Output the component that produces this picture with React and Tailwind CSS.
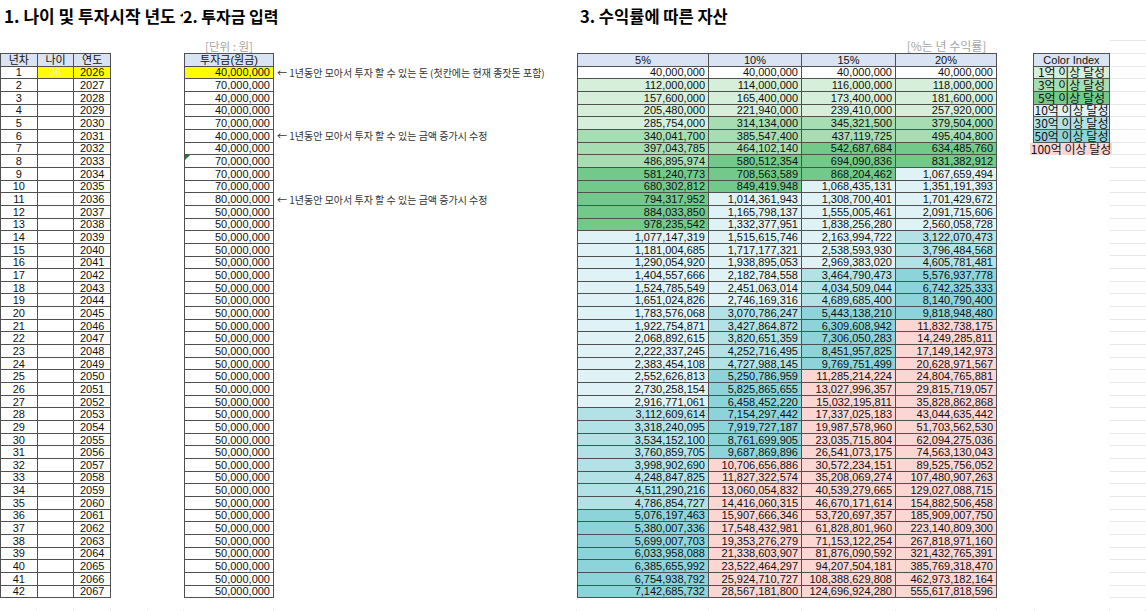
import clsx from "clsx";

const invest = [40, 70, 40, 40, 70, 40, 40, 70, 70, 70, 80, 50, 50]
  .concat(Array(29).fill(50))
  .map((m) => m * 1000000);

const rates = [0.05, 0.1, 0.15, 0.2];

const series = rates.map((r) => {
  let v = 0;
  return invest.map((a) => (v = v * (1 + r) + a));
});

const fmt = (n) => Math.round(n).toLocaleString("en-US");

const fillFor = (v) => {
  if (v >= 1e10) return "bg-[#fbd6d3]";
  if (v >= 5e9) return "bg-[#8dd3da]";
  if (v >= 3e9) return "bg-[#b2e2e6]";
  if (v >= 1e9) return "bg-[#dff2f5]";
  if (v >= 5e8) return "bg-[#72c98a]";
  if (v >= 3e8) return "bg-[#a6ddb2]";
  if (v >= 1e8) return "bg-[#d5efda]";
  return "bg-white";
};

const notes = {
  0: "← 1년동안 모아서 투자 할 수 있는 돈 (첫칸에는 현재 종잣돈 포함)",
  5: "← 1년동안 모아서 투자 할 수 있는 금액 증가시 수정",
  10: "← 1년동안 모아서 투자 할 수 있는 금액 증가시 수정",
};

const legend = [
  ["1억 이상 달성", "bg-[#d5efda]"],
  ["3억 이상 달성", "bg-[#a6ddb2]"],
  ["5억 이상 달성", "bg-[#72c98a]"],
  ["10억 이상 달성", "bg-[#dff2f5]"],
  ["30억 이상 달성", "bg-[#b2e2e6]"],
  ["50억 이상 달성", "bg-[#8dd3da]"],
];

const kr = { fontFamily: '"Noto Sans CJK KR", sans-serif' };

const Cell = ({ className, children }) => (
  <div
    className={clsx(
      "h-full border-r border-b border-[#505050] flex items-center px-[3px] overflow-hidden whitespace-nowrap",
      className
    )}
  >
    {children}
  </div>
);

const Row = ({ children, className }) => (
  <div className={clsx("flex h-[12.67px]", className)}>{children}</div>
);

const App = () => {
  return (
    <div
      className="w-[1146px] h-[611px] overflow-hidden bg-white text-[#111]"
      style={{ fontFamily: '"Liberation Sans", "Noto Sans CJK KR", sans-serif' }}
    >
      {/* titles */}
      <div className="flex items-center h-[31px] font-bold text-black pt-[1px]" style={kr}>
        <span className="w-[183px] pl-[4px] text-[17px] overflow-hidden whitespace-nowrap">1. 나이 및 투자시작 년도 설정</span>
        <span className="w-[397px] text-[16px] whitespace-nowrap">2. 투자금 입력</span>
        <span className="text-[16.5px] whitespace-nowrap">3. 수익률에 따른 자산</span>
      </div>

      <div className="flex text-[11px] leading-[12px]">
        {/* 1. years and age */}
        <div className="w-[111px] flex flex-col">
          <div className="h-[22px]" />
          <div className="border-l border-t border-[#505050]">
            <Row className="bg-[#dae3f3]">
              <Cell className="w-[37px] justify-center">년차</Cell>
              <Cell className="w-[37px] justify-center">나이</Cell>
              <Cell className="w-[37px] justify-center">연도</Cell>
            </Row>
            {invest.map((_, i) => (
              <Row key={i}>
                <Cell className="w-[37px] justify-center">{i + 1}</Cell>
                <Cell className={clsx("w-[37px] justify-center", i === 0 && "bg-[#ffff00] text-[#f7f3a6]")}>
                  {i === 0 ? "36" : ""}
                </Cell>
                <Cell className={clsx("w-[37px] justify-center", i === 0 && "bg-[#ffff00]")}>{2026 + i}</Cell>
              </Row>
            ))}
          </div>
        </div>

        <div className="w-[73px]" />

        {/* 2. investment */}
        <div className="w-[393px] flex flex-col">
          <div className="h-[22px] w-[90px] flex items-end justify-center pb-[1px] text-[11.5px] text-[#a6a6a6]" style={kr}>[단위 : 원]</div>
          <div className="border-t border-[#505050] w-[90px]">
            <Row className="bg-[#dae3f3] border-l border-[#505050]">
              <Cell className="w-[89px] justify-center">투자금(원금)</Cell>
            </Row>
          </div>
          {invest.map((a, i) => (
            <Row key={i}>
              <div className="relative border-l border-[#505050] w-[90px]">
                <Cell className={clsx("w-[89px] justify-end", i === 0 && "bg-[#ffff00]")}>{fmt(a)}</Cell>
                {i === 7 && (
                  <span className="absolute top-0 left-0 border-t-[5px] border-r-[5px] border-t-[#1e7b3a] border-r-transparent" />
                )}
              </div>
              {notes[i] && (
                <span className="ml-[3px] text-[10px] text-[#333] whitespace-nowrap self-center" style={kr}>
                  {notes[i]}
                </span>
              )}
            </Row>
          ))}
        </div>

        {/* 3. assets by rate */}
        <div className="w-[420px] flex flex-col">
          <div className="h-[22px] flex">
            <div className="w-[319px]" />
            <div className="w-[101px] flex items-end justify-center pb-[1px] text-[12px] text-[#a6a6a6] whitespace-nowrap" style={kr}>[%는 년 수익률]</div>
          </div>
          <div className="border-l border-t border-[#505050]">
            <Row className="bg-[#dae3f3]">
              <Cell className="w-[131px] justify-center">5%</Cell>
              <Cell className="w-[93px] justify-center">10%</Cell>
              <Cell className="w-[94px] justify-center">15%</Cell>
              <Cell className="w-[101px] justify-center">20%</Cell>
            </Row>
            {invest.map((_, i) => (
              <Row key={i}>
                <Cell className={clsx("w-[131px] justify-end", fillFor(series[0][i]))}>{fmt(series[0][i])}</Cell>
                <Cell className={clsx("w-[93px] justify-end", fillFor(series[1][i]))}>{fmt(series[1][i])}</Cell>
                <Cell className={clsx("w-[94px] justify-end", fillFor(series[2][i]))}>{fmt(series[2][i])}</Cell>
                <Cell className={clsx("w-[101px] justify-end", fillFor(series[3][i]))}>{fmt(series[3][i])}</Cell>
              </Row>
            ))}
          </div>
        </div>

        <div className="w-[36px]" />

        {/* color index */}
        <div className="w-[77px] flex flex-col">
          <div className="h-[22px]" />
          <div className="border-l border-t border-[#505050]">
            <Row className="bg-[#dae3f3]">
              <Cell className="w-[76px] justify-center">Color Index</Cell>
            </Row>
            {legend.map(([label, bg]) => (
              <Row key={label}>
                <Cell className={clsx("w-[76px] justify-center px-0 text-[12px]", bg)}>
                  <span style={kr}>{label}</span>
                </Cell>
              </Row>
            ))}
          </div>
          <Row className="-ml-[3px] w-[82px] bg-[#fbd6d3] justify-center items-center text-[12px] whitespace-nowrap">
            <span style={kr}>100억 이상 달성</span>
          </Row>
        </div>

        {/* sheet gridlines */}
        <div className="flex-1 flex flex-col">
          <div className="h-[9.33px]" />
          {Array.from({ length: 45 }).map((_, i) => (
            <div key={i} className="h-[12.67px] border-t border-[#e6e6e6]" />
          ))}
        </div>
      </div>

      <div className="flex h-[12px] border-b border-[#e6e6e6]">
        {[37, 37, 37, 37, 36, 90, 303, 132, 93, 94, 101, 38, 75, 36].map((w, i) => (
          <div key={i} style={{ width: w }} className="border-r border-[#e6e6e6]" />
        ))}
      </div>
    </div>
  );
};

export default App;
